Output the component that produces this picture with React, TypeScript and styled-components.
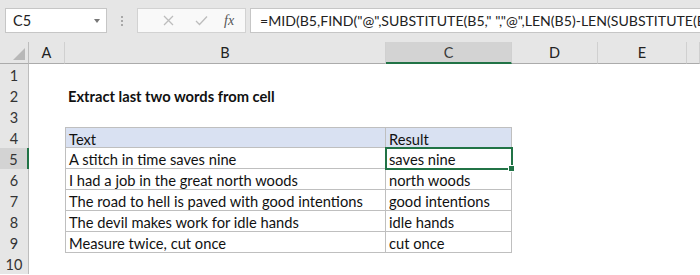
import React from 'react';
import styled, { createGlobalStyle } from "styled-components";

const GlobalStyle = createGlobalStyle`
  body {
    margin: 0;
    background: #fff;
    overflow: hidden;
    font-family: Lato, "Liberation Sans", sans-serif;
  }
`

const Window = styled.div`
  width: 700px;
  height: 275px;
  overflow: hidden;
`

const FormulaBar = styled.div`
  height: 42px;
  background: #e6e6e6;
  display: flex;
  align-items: flex-start;
  padding: 8px 0 0 5px;
  box-sizing: border-box;
`

const NameBox = styled.div`
  width: 102px;
  height: 25px;
  box-sizing: border-box;
  background: #fff;
  border: 1px solid #c6c6c6;
  display: flex;
  align-items: center;
  justify-content: space-between;
  padding: 0 6px 0 7px;
  font-size: 14.5px;
  color: #222;
`

const DropArrow = styled.span`
  width: 0;
  height: 0;
  border-left: 3px solid transparent;
  border-right: 3px solid transparent;
  border-top: 4px solid #777;
`

const Grip = styled.div`
  width: 30px;
  height: 25px;
  display: flex;
  flex-direction: column;
  align-items: center;
  justify-content: center;
  gap: 2px;

  span {
    width: 2px;
    height: 2px;
    background: #a8a8a8;
  }
`

const FxBox = styled.div`
  width: 109px;
  height: 25px;
  box-sizing: border-box;
  background: #f9f9f9;
  border: 1px solid #d2d2d2;
  display: flex;
  align-items: center;
  padding: 0 10px 0 14px;
`

const FxButton = styled.div`
  width: 33px;
  height: 25px;
  display: flex;
  align-items: center;
  justify-content: center;
`

const FxLabel = styled.span`
  font-family: "Liberation Serif", serif;
  font-style: italic;
  font-size: 14px;
  color: #555;
  margin-left: 6px;
`

const FormulaInput = styled.div`
  flex: 1;
  min-width: 0;
  margin-left: 4px;
  height: 25px;
  box-sizing: border-box;
  background: #fff;
  border: 1px solid #c6c6c6;
  border-right: none;
  display: flex;
  align-items: center;
  padding-left: 9px;
  font-size: 14.1px;
  color: #222;
  white-space: nowrap;
  overflow: hidden;
`

const Sheet = styled.div`
  display: grid;
  grid-template-columns: 29px 36px 321px 126px 86px 89px 1fr;
  grid-template-rows: 22px;
  grid-auto-rows: 21px;
`

const Corner = styled.div`
  background: #e6e6e6;
  border-right: 1px solid #bdbdbd;
  border-bottom: 1px solid #ababab;
  box-sizing: border-box;
  display: flex;
  align-items: flex-end;
  justify-content: flex-end;
  padding: 0 3px 3px 0;

  span {
    width: 0;
    height: 0;
    border-left: 12px solid transparent;
    border-bottom: 12px solid #b8b8b8;
  }
`

const ColHead = styled.div<{ $active?: boolean }>`
  background: ${p => p.$active ? "#d3d3d3" : "#e6e6e6"};
  border-right: 1px solid #d0d0d0;
  border-bottom: ${p => p.$active ? "2px solid #217346" : "1px solid #ababab"};
  box-sizing: border-box;
  display: flex;
  align-items: center;
  justify-content: center;
  padding-top: ${p => p.$active ? "1px" : "0"};
  font-size: 14.5px;
  color: ${p => p.$active ? "#3a3a3a" : "#222"};
`

const RowHead = styled.div<{ $active?: boolean }>`
  background: ${p => p.$active ? "#d3d3d3" : "#e6e6e6"};
  border-right: ${p => p.$active ? "2px solid #217346" : "1px solid #bdbdbd"};
  box-sizing: border-box;
  display: flex;
  align-items: center;
  justify-content: center;
  padding-top: 1px;
  font-size: 14.5px;
  color: #333;
`

const Cell = styled.div<{ $table?: boolean; $head?: boolean; $first?: boolean; $left?: boolean; $bold?: boolean }>`
  position: relative;
  box-sizing: border-box;
  padding: 2px 0 0 3px;
  font-size: 14.7px;
  line-height: 19px;
  font-weight: ${p => p.$bold ? 700 : 400};
  color: #111;
  white-space: nowrap;
  background: ${p => p.$head ? "#d9e1f2" : "#fff"};
  border-right: ${p => p.$table ? "1px solid #bfbfbf" : "none"};
  border-bottom: ${p => p.$table ? "1px solid #bfbfbf" : "none"};
  border-top: ${p => p.$first ? "1px solid #bfbfbf" : "none"};
  border-left: ${p => p.$left ? "1px solid #bfbfbf" : "none"};
`

const Selection = styled.div`
  position: absolute;
  z-index: 2;
  left: -1px;
  top: -1px;
  right: -2px;
  bottom: -2px;
  border: 2px solid #217346;
  pointer-events: none;

  &::after {
    content: "";
    position: absolute;
    right: -4px;
    bottom: -4px;
    width: 5px;
    height: 5px;
    background: #217346;
    border: 1px solid #fff;
  }
`

const rows: [string, string][] = [
    ["A stitch in time saves nine", "saves nine"],
    ["I had a job in the great north woods", "north woods"],
    ["The road to hell is paved with good intentions", "good intentions"],
    ["The devil makes work for idle hands", "idle hands"],
    ["Measure twice, cut once", "cut once"],
]

const cols = ["A", "B", "C", "D", "E", ""]

const Blank = () => (
    <>
        <Cell />
        <Cell />
        <Cell />
    </>
)

const App = () => {
    return (
        <Window>
            <GlobalStyle />
            <FormulaBar>
                <NameBox>
                    C5
                    <DropArrow />
                </NameBox>
                <Grip><span /><span /><span /></Grip>
                <FxBox>
                    <FxButton>
                        <svg width="11" height="11" viewBox="0 0 11 11">
                            <path d="M1 1L10 10M10 1L1 10" stroke="#bdbdbd" strokeWidth="1.3" fill="none" />
                        </svg>
                    </FxButton>
                    <FxButton>
                        <svg width="13" height="11" viewBox="0 0 13 11">
                            <path d="M1 6L4.5 9.5L12 1.5" stroke="#bdbdbd" strokeWidth="1.3" fill="none" />
                        </svg>
                    </FxButton>
                    <FxLabel>fx</FxLabel>
                </FxBox>
                <FormulaInput>
                    =MID(B5,FIND("@",SUBSTITUTE(B5," ","@",LEN(B5)-LEN(SUBSTITUTE(B5
                </FormulaInput>
            </FormulaBar>
            <Sheet>
                <Corner><span /></Corner>
                {cols.map((c, i) => <ColHead key={i} $active={c === "C"}>{c}</ColHead>)}

                <RowHead>1</RowHead>
                <Cell /><Cell /><Cell /><Blank />

                <RowHead>2</RowHead>
                <Cell /><Cell $bold>Extract last two words from cell</Cell><Cell /><Blank />

                <RowHead>3</RowHead>
                <Cell /><Cell /><Cell /><Blank />

                <RowHead>4</RowHead>
                <Cell />
                <Cell $table $head $first $left>Text</Cell>
                <Cell $table $head $first>Result</Cell>
                <Blank />

                {rows.map(([text, result], i) => (
                    <React.Fragment key={i}>
                        <RowHead $active={i === 0}>{i + 5}</RowHead>
                        <Cell />
                        <Cell $table $left>{text}</Cell>
                        <Cell $table>
                            {result}
                            {i === 0 && <Selection />}
                        </Cell>
                        <Blank />
                    </React.Fragment>
                ))}

                <RowHead>10</RowHead>
                <Cell /><Cell /><Cell /><Blank />
            </Sheet>
        </Window>
    );
};

export default App;
